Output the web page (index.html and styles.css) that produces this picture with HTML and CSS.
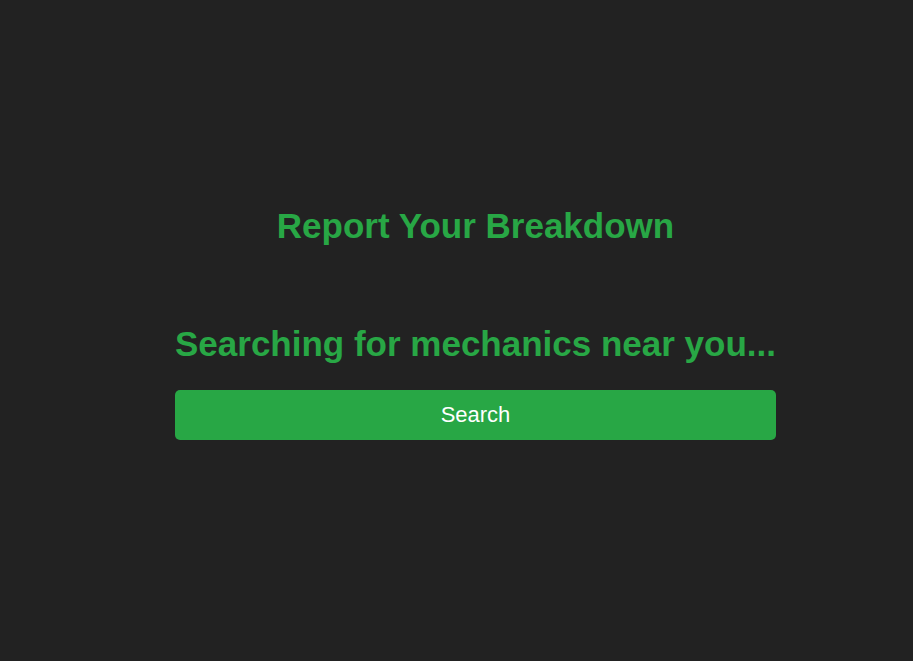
FILE: index.html
```html
<!DOCTYPE html>
<html lang="en">
<head>
<meta charset="utf-8">
<title>Report Your Breakdown</title>
<link rel="stylesheet" href="styles.css">
</head>
<body>
<main class="page">
  <h1 class="title">Report Your Breakdown</h1>
  <section class="search">
    <h2 class="status">Searching for mechanics near you...</h2>
    <button class="search-btn" type="button">Search</button>
  </section>
</main>
</body>
</html>
```

FILE: styles.css
```css
html, body {
  margin: 0;
  padding: 0;
  background: #222222;
  height: 100%;
}
body {
  font-family: "Liberation Sans", Arial, sans-serif;
}
.page {
  box-sizing: border-box;
  min-height: 100%;
  padding: 206px 0 0 38px;
  display: flex;
  flex-direction: column;
  align-items: center;
}
.title {
  margin: 0;
  font-size: 35px;
  font-weight: bold;
  color: #28a745;
  line-height: 40px;
}
.search {
  width: 601px;
  margin-top: 78px;
  display: flex;
  flex-direction: column;
  align-items: center;
}
.status {
  margin: 0 0 26px;
  font-size: 35px;
  font-weight: bold;
  color: #28a745;
  line-height: 40px;
  white-space: nowrap;
}
.search-btn {
  width: 100%;
  height: 50px;
  border: none;
  border-radius: 5px;
  background: #28a745;
  color: #ffffff;
  font-family: "Liberation Sans", Arial, sans-serif;
  font-size: 22px;
  cursor: pointer;
}
```
